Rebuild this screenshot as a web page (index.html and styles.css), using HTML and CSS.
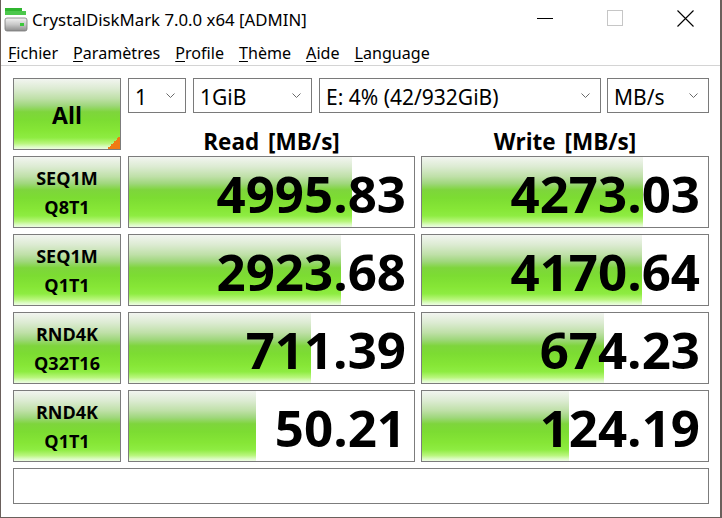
FILE: index.html
```html
<!DOCTYPE html>
<html>
<head>
<meta charset="utf-8">
<title>CrystalDiskMark</title>
<link rel="stylesheet" href="styles.css">
</head>
<body>
<div class="window">
  <div class="titlebar">
    <svg class="app-icon" width="24" height="26" viewBox="0 0 24 26">
      <defs>
        <linearGradient id="body" x1="0" y1="0" x2="0" y2="1">
          <stop offset="0" stop-color="#f4f4f4"/>
          <stop offset="0.5" stop-color="#c8c8c8"/>
          <stop offset="1" stop-color="#8c8c8c"/>
        </linearGradient>
      </defs>
      <rect x="1" y="1" width="17" height="3" fill="#2fb52f"/>
      <rect x="1" y="4" width="21" height="4" fill="#4cc84c"/>
      <rect x="1" y="11" width="22" height="13" rx="2" fill="url(#body)" stroke="#7a7a7a" stroke-width="0.8"/>
      <rect x="16" y="16" width="4" height="3" fill="#3cc83c"/>
    </svg>
    <span class="title">CrystalDiskMark 7.0.0 x64 [ADMIN]</span>
    <div class="caption-buttons">
      <span class="cap-btn">
        <svg width="16" height="16" viewBox="0 0 16 16"><line x1="0" y1="8.5" x2="16" y2="8.5" stroke="#000" stroke-width="1"/></svg>
      </span>
      <span class="cap-btn">
        <svg width="16" height="16" viewBox="0 0 16 16"><rect x="0.5" y="0.5" width="15" height="15" fill="none" stroke="#c6c6c6" stroke-width="1"/></svg>
      </span>
      <span class="cap-btn">
        <svg width="17" height="17" viewBox="0 0 17 17"><path d="M0.5 0.5 L16.5 16.5 M16.5 0.5 L0.5 16.5" stroke="#000" stroke-width="1.1" fill="none"/></svg>
      </span>
    </div>
  </div>
  <div class="menubar">
    <span class="menu-item"><u>F</u>ichier</span>
    <span class="menu-item"><u>P</u>aramètres</span>
    <span class="menu-item"><u>P</u>rofile</span>
    <span class="menu-item"><u>T</u>hème</span>
    <span class="menu-item"><u>A</u>ide</span>
    <span class="menu-item"><u>L</u>anguage</span>
  </div>
  <div class="content">
    <div class="grid">
      <div class="btn all">All</div>
      <div class="combos">
        <div class="combo c1"><span>1</span><svg class="chev" width="9" height="5" viewBox="0 0 9 5"><path d="M0.5 0.5 L4.5 4.5 L8.5 0.5" fill="none" stroke="#6a6a6a" stroke-width="1"/></svg></div>
        <div class="combo c2"><span>1GiB</span><svg class="chev" width="9" height="5" viewBox="0 0 9 5"><path d="M0.5 0.5 L4.5 4.5 L8.5 0.5" fill="none" stroke="#6a6a6a" stroke-width="1"/></svg></div>
        <div class="combo c3"><span>E: 4% (42/932GiB)</span><svg class="chev" width="9" height="5" viewBox="0 0 9 5"><path d="M0.5 0.5 L4.5 4.5 L8.5 0.5" fill="none" stroke="#6a6a6a" stroke-width="1"/></svg></div>
        <div class="combo c4"><span>MB/s</span><svg class="chev" width="9" height="5" viewBox="0 0 9 5"><path d="M0.5 0.5 L4.5 4.5 L8.5 0.5" fill="none" stroke="#6a6a6a" stroke-width="1"/></svg></div>
      </div>
      <div class="head read-head">Read [MB/s]</div>
      <div class="head write-head">Write [MB/s]</div>

      <div class="btn label"><span>SEQ1M</span><span>Q8T1</span></div>
      <div class="value" style="background-size: 223px 100%">4995.83</div>
      <div class="value" style="background-size: 221px 100%">4273.03</div>

      <div class="btn label"><span>SEQ1M</span><span>Q1T1</span></div>
      <div class="value" style="background-size: 212px 100%">2923.68</div>
      <div class="value" style="background-size: 220px 100%">4170.64</div>

      <div class="btn label"><span>RND4K</span><span>Q32T16</span></div>
      <div class="value" style="background-size: 182px 100%">711.39</div>
      <div class="value" style="background-size: 182px 100%">674.23</div>

      <div class="btn label"><span>RND4K</span><span>Q1T1</span></div>
      <div class="value" style="background-size: 127px 100%">50.21</div>
      <div class="value" style="background-size: 147px 100%">124.19</div>

      <div class="status"></div>
    </div>
  </div>
</div>
</body>
</html>
```
FILE: styles.css
```css
* { box-sizing: border-box; }
html, body { margin: 0; padding: 0; background: #fff; }
body { width: 722px; height: 518px; overflow: hidden; }

.window {
  width: 722px;
  height: 518px;
  background: #fff;
  border-left: 1px solid #6a605c;
  border-right: 2px solid #6a605c;
  border-bottom: 1px solid #6a605c;
  font-family: "Noto Sans", "Open Sans", sans-serif;
  color: #000;
}

.titlebar {
  height: 38px;
  display: flex;
  align-items: center;
}
.app-icon { margin-left: 3px; margin-top: 1px; flex: none; }
.title {
  margin-left: 4px;
  font-size: 16.8px;
  white-space: nowrap;
}
.caption-buttons {
  margin-left: auto;
  display: flex;
  height: 38px;
}
.cap-btn {
  width: 70px;
  display: flex;
  align-items: center;
  justify-content: center;
  padding-bottom: 2px;
}

.menubar {
  height: 28px;
  display: flex;
  align-items: center;
  padding-left: 7px;
  font-size: 16.1px;
  border-bottom: 1px solid #d4d4d4;
  padding-top: 2px;
}
.menu-item { margin-right: 15px; white-space: nowrap; }
.menu-item u { text-decoration-thickness: 1px; text-underline-offset: 2px; }

.content {
  padding: 12px 0 0 12px;
}
.grid {
  display: grid;
  grid-template-columns: 109px 287px 288px;
  grid-template-rows: 72px 72px 72px 72px 72px 36px;
  column-gap: 6px;
  row-gap: 6px;
}

.btn, .value {
  border: 1px solid #7c7c7c;
  background-color: #fff;
  background-image: linear-gradient(to bottom,
    #f2f5f0 0%, #dcebd2 14%, #bfe0a8 28%, #9fd77c 38%,
    #7ed53c 47%, #7cdc32 58%, #86e636 74%, #8eec42 84%,
    #b8f67c 92%, #dcfcc4 97%, #eefde2 100%);
  background-repeat: no-repeat;
}

.btn {
  width: 108px;
  font-family: "Open Sans", "Noto Sans", sans-serif;
  font-weight: 700;
  display: flex;
  flex-direction: column;
  align-items: center;
  justify-content: center;
}
.all {
  grid-row: 1;
  grid-column: 1;
  font-size: 23px;
  background-image:
    linear-gradient(to top left, #f07a14 50%, rgba(240,122,20,0) 50%),
    linear-gradient(to bottom,
    #f2f5f0 0%, #dcebd2 14%, #bfe0a8 28%, #9fd77c 38%,
    #7ed53c 47%, #7cdc32 58%, #86e636 74%, #8eec42 84%,
    #b8f67c 92%, #dcfcc4 97%, #eefde2 100%);
  background-size: 13px 13px, 100% 100%;
  background-position: right bottom, 0 0;
  padding-top: 2px;
}
.label {
  font-size: 18px;
  line-height: 29px;
  padding-top: 1px;
}

.combos {
  grid-row: 1;
  grid-column: 2 / 4;
  align-self: start;
  display: flex;
  height: 35px;
}
.combo {
  height: 35px;
  border: 1px solid #7a7a7a;
  background: #fff;
  display: flex;
  align-items: center;
  padding-left: 6px;
  padding-right: 10px;
  padding-top: 4px;
  font-size: 21px;
  white-space: nowrap;
}
.combo span { flex: 1; line-height: 1; padding-bottom: 1px; }
.chev { flex: none; margin-top: -5px; }
.c1 { width: 58px; margin-right: 7px; }
.c2 { width: 119px; margin-right: 7px; }
.c3 { width: 282px; margin-right: 6px; }
.c4 { width: 102px; }

.head {
  grid-row: 1;
  align-self: end;
  height: 37px;
  display: flex;
  align-items: center;
  justify-content: center;
  padding-top: 21px;
  font-family: "Open Sans", "Noto Sans", sans-serif;
  font-weight: 700;
  font-size: 22.5px;
  line-height: 1;
  word-spacing: 3px;
}
.read-head { grid-column: 2; }
.write-head { grid-column: 3; }

.value {
  display: flex;
  align-items: center;
  justify-content: flex-end;
  padding-right: 8px;
  padding-top: 3px;
  font-family: "Open Sans", "Noto Sans", sans-serif;
  font-weight: 700;
  font-size: 51px;
  line-height: 1;
}

.status {
  grid-column: 1 / 4;
  border: 1px solid #7c7c7c;
  background: #fff;
}
```
